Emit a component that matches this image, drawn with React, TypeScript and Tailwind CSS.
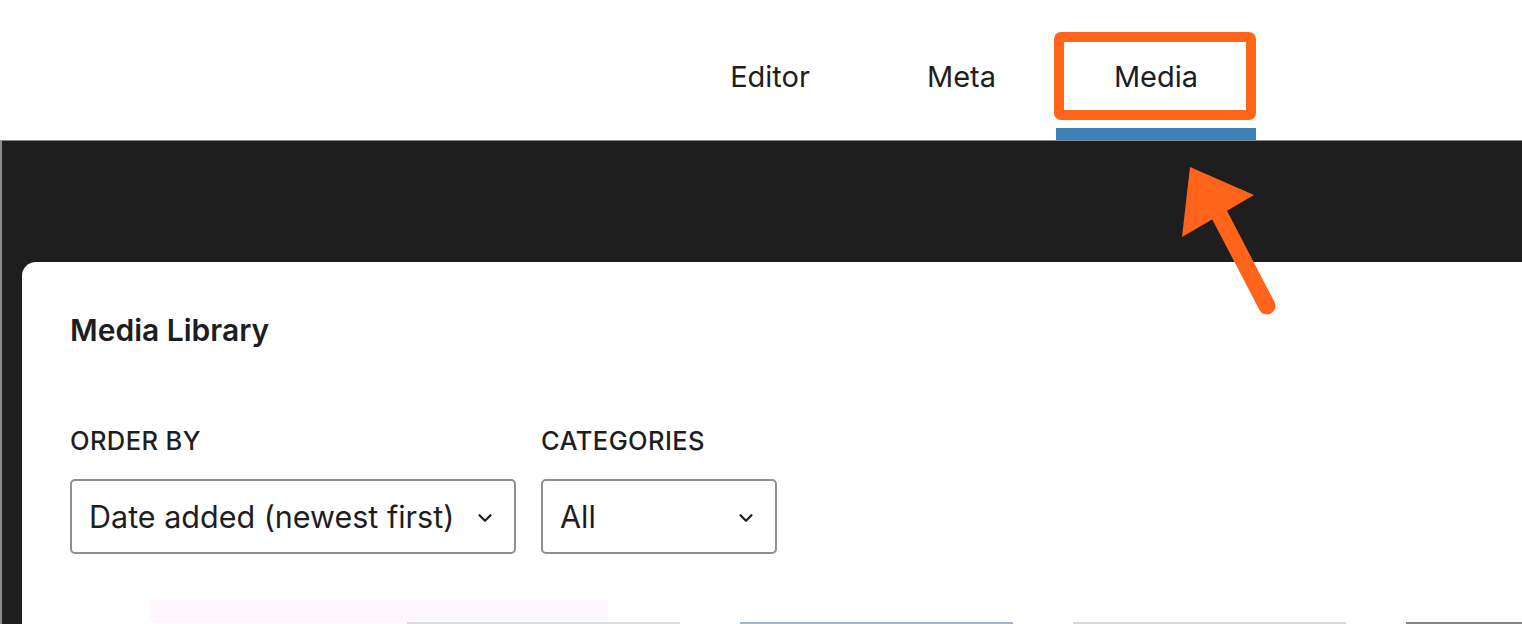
import { ChevronDown } from 'lucide-react';

const font = { fontFamily: 'Inter, "Noto Sans", sans-serif' };

function Select({ value, width }: { value: string; width: string }) {
  return (
    <div
      className={`h-[75px] ${width} flex items-center justify-between pl-[17px] pr-[18px] pt-[2px] border-2 border-[#8c8f94] rounded-[5px] bg-white`}
    >
      <span className="text-[30.5px] leading-none text-[#1e1e1e]">{value}</span>
      <ChevronDown className="w-[22px] h-[22px] text-[#1e1e1e]" strokeWidth={2.4} />
    </div>
  );
}

export default function App() {
  return (
    <div className="relative w-[1522px] h-[624px] overflow-hidden bg-white" style={font}>
      {/* tabs */}
      <div className="h-[140px] flex bg-white">
        <div className="ml-[673px] flex">
          <div className="w-[194px] h-[140px] flex items-start justify-center pt-[55px] text-[29px] text-[#1e1e1e]">
            Editor
          </div>
          <div className="w-[189px] h-[140px] flex items-start justify-center pt-[55px] text-[29px] text-[#1e1e1e]">
            Meta
          </div>
          <div className="w-[200px] h-[140px] flex flex-col">
            <div className="flex-1 flex items-start justify-center pt-[55px] text-[29px] text-[#1e1e1e]">
              Media
            </div>
            <div className="h-[12px] bg-[#3a81b5]" />
          </div>
        </div>
      </div>

      {/* dark editor area */}
      <div className="h-[484px] bg-[#1e1e1e] border-t border-l-2 border-[#8a8a8a] flex pl-[20px] pt-[121px]">
        <div className="flex-1 bg-white rounded-tl-[14px] pl-[48px] pt-[50px]">
          <h2 className="text-[30px] font-semibold leading-[36px] text-[#1e1e1e]">Media Library</h2>
          <div className="mt-[79px] flex gap-[25px]">
            <div className="flex flex-col gap-[24px]">
              <span className="text-[25.5px] font-medium leading-[28px] tracking-[0.4px] text-[#1e1e1e]">ORDER BY</span>
              <Select value="Date added (newest first)" width="w-[446px]" />
            </div>
            <div className="flex flex-col gap-[24px]">
              <span className="text-[25.5px] font-medium leading-[28px] tracking-[0.4px] text-[#1e1e1e]">CATEGORIES</span>
              <Select value="All" width="w-[236px]" />
            </div>
          </div>
          <div className="mt-[46px] ml-[80px] w-[458px] h-[22px] bg-[#fdf6fd]" />
          <div className="flex gap-[60px] ml-[337px]">
            <div className="w-[273px] h-[20px] bg-[#d9dee4]" />
            <div className="w-[273px] h-[20px] bg-[#9fb6cd]" />
            <div className="w-[273px] h-[20px] bg-[#d8d8d8]" />
            <div className="w-[273px] h-[20px] bg-[#7d8c7a]" />
          </div>
        </div>
      </div>

      {/* annotation: highlight box */}
      <div className="absolute left-[1054px] top-[32px] w-[202px] h-[88px] border-[10px] border-[#ff641a] rounded-[7px]" />

      {/* annotation: arrow */}
      <svg className="absolute left-0 top-0" width="1522" height="624" viewBox="0 0 1522 624">
        <line x1="1267" y1="306" x2="1218" y2="212" stroke="#ff641a" strokeWidth="17" strokeLinecap="round" />
        <polygon points="1190,167 1254,195 1182,237" fill="#ff641a" />
      </svg>
    </div>
  );
}
